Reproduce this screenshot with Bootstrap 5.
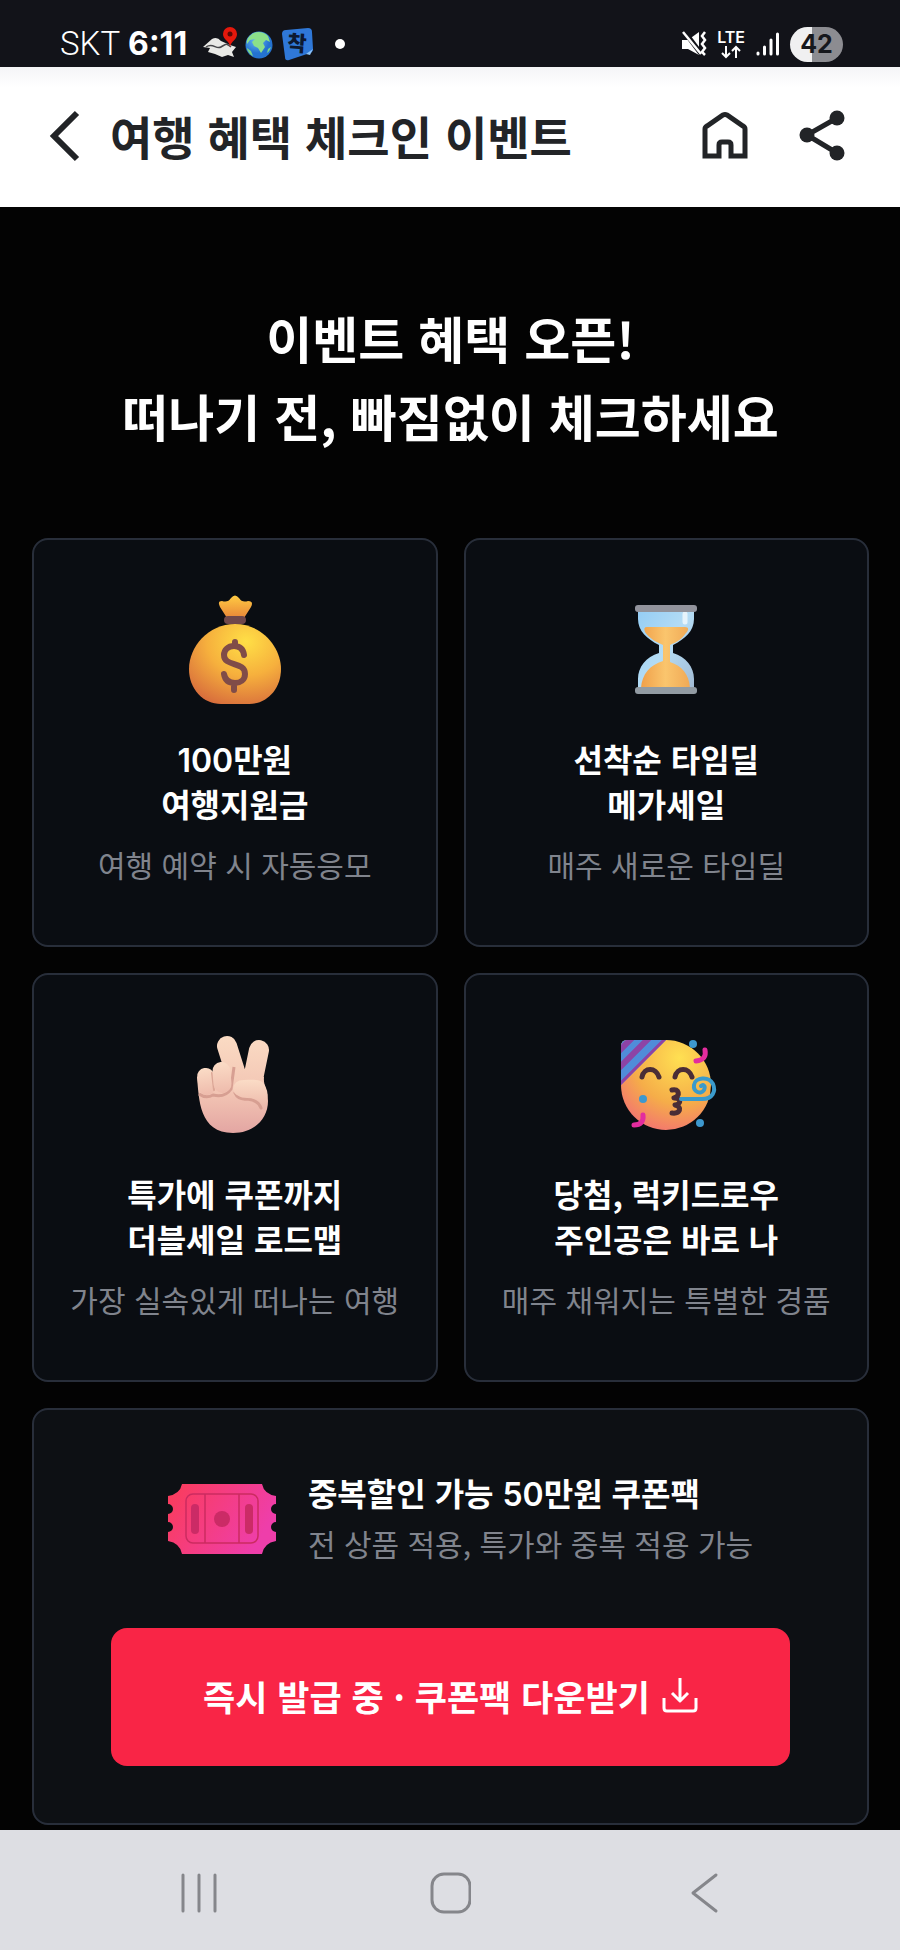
<!DOCTYPE html>
<html lang="ko">
<head>
<meta charset="utf-8">
<meta name="viewport" content="width=device-width, initial-scale=1">
<title>여행 혜택 체크인 이벤트</title>
<link rel="stylesheet" href="https://cdn.jsdelivr.net/npm/bootstrap@5.3.0/dist/css/bootstrap.min.css">
<style>
  body { font-family: "Noto Sans CJK KR", sans-serif; background: #030303; color: #fff; }
  svg { display: block; flex-shrink: 0; }
  .num { font-family: Inter, sans-serif; font-weight: 600; line-height: 1; }

  .status-bar { background: #121319; padding: 21px 57px 0 60px; height: 67px; }
  .carrier { font: 300 33px/46px Roboto, sans-serif; }
  .clock { font: 700 32px/46px Inter, sans-serif; }
  .status-icons { gap: 10px; }
  .lte { font: 600 16px/16px Inter, sans-serif; }
  .battery { width: 53px; height: 35px; border-radius: 18px; font: 700 25px/35px Inter, sans-serif;
    color: #17181d; background: linear-gradient(90deg, #f0f0f1 42%, #8c8c91 42%); }

  .title-bar { background: linear-gradient(#f5f5f7, #fff 20px); color: #222427; padding: 36px 52px 40px 42px; min-height: 140px; }
  .title-bar h1 { font-size: 46px; line-height: 60px; font-weight: 700; padding-left: 26px; }
  .title-bar button { color: inherit; }

  .hero { font-size: 50px; line-height: 78px; font-weight: 700; padding: 91px 0 84px; }
  .page-body { padding: 0 31px 5px 32px; }
  .benefits { --bs-gutter-x: 26px; --bs-gutter-y: 26px; }
  .panel { background: #0a0d12; border: 2px solid #282e3a; border-radius: 16px; }
  .benefit { padding: 54px 16px 59px; }
  .benefit h3, .coupon h3 { font-size: 32px; line-height: 45px; font-weight: 700; }
  .benefit h3 { margin: 30px 0 16px; }
  .sub-text { font-size: 30px; line-height: 44px; font-weight: 400; color: #80848d; }
  .coupon { background: #0d1014; margin-top: 26px; padding: 57px 77px; }
  .coupon-info { gap: 32px; margin-bottom: 59px; }
  .coupon h3, .coupon .sub-text { line-height: 51px; }
  .btn-coupon { --bs-btn-bg: #f92546; --bs-btn-color: #fff; --bs-btn-hover-bg: #e01e3d; --bs-btn-hover-color: #fff;
    border: 0; border-radius: 16px; padding: 41px 16px 43px; font-size: 35px; line-height: 54px; font-weight: 700; gap: 12px; }
  .system-nav { background: #dddee3; height: 120px; padding: 6px 72px 0; color: #85868b; }
  .system-nav button { color: inherit; }
</style>
</head>
<body class="d-flex flex-column min-vh-100">

<div class="status-bar d-flex justify-content-between align-items-center">
  <div class="d-flex align-items-center">
    <span class="carrier me-2">SKT</span>
    <span class="clock me-3">6:11</span>
    <svg class="me-2" width="34" height="34" viewBox="0 0 34 34" aria-hidden="true">
      <path d="M0 20 9 12Q14 9 18 14L27 18 33 20 29 25 31 30 25 28 19 30 12 27 5 25 7 21Z" fill="#e9e9e6"/>
      <path d="M3 20c7-5 10 3 15 0s5-4 10 0" fill="none" stroke="#47474a" stroke-width="1.5"/>
      <path d="M28 20c0-6-7-7-7-13a7 7 0 0 1 14 0c0 6-6 7-7 13Z" transform="translate(-1)" fill="#e5180c"/>
      <circle cx="27" cy="7" r="2.5" fill="#5c0906"/>
    </svg>
    <svg width="28" height="34" viewBox="0 0 28 34" aria-hidden="true">
      <defs><radialGradient id="sea" cx=".4" cy=".3"><stop offset="0" stop-color="#6dbcf5"/><stop offset="1" stop-color="#2472d0"/></radialGradient></defs>
      <circle cx="14" cy="18" r="13.5" fill="url(#sea)"/>
      <path d="M6 8c5-5 13-3 17 1l2 6-4-2-3 3 2 4-4 6-3-5-4-2-2-4 3-3-5 1-3 4c-1-3 1-7 4-9Z" fill="#8ce08a"/>
      <path d="M2 21l4 3 2 5c-3-1-6-5-6-8ZM23 22l3-2c-1 3-2 5-4 6Z" fill="#7ad48a"/>
    </svg>
    <svg class="ms-2" width="34" height="34" viewBox="0 0 34 34" role="img" aria-label="착">
      <path d="M5 3 27 1q4 0 4 4l1 17q0 3-3 4L8 33q-4 1-4-3L1 7q0-4 4-4Z" fill="#2f78d8"/>
      <path d="M32 22l-3 6-4-1Z" fill="#8cc1f5"/>
      <text x="16" y="24" text-anchor="middle" font-family="Noto Sans CJK KR, sans-serif" font-weight="900" font-size="21" fill="#0d1930" transform="rotate(4 16 16)">착</text>
    </svg>
    <svg class="ms-3" width="16" height="12" viewBox="0 0 16 12" aria-hidden="true"><circle cx="9" cy="6" r="5" fill="#fff"/></svg>
  </div>
  <div class="status-icons d-flex align-items-center">
    <svg width="26" height="26" viewBox="0 0 26 26" fill="none" stroke="#fff" aria-hidden="true">
      <path d="M1 9h6l11-8v23L7 18H1Z" fill="#fff" stroke="none"/>
      <path d="M3 0l18 24" stroke="#121319" stroke-width="5"/>
      <path d="M2 1l18 22" stroke-width="2.5"/>
      <path d="M24 1l-3 4 3 4-3 4 3 4-3 4 3 3" stroke-width="2.5"/>
    </svg>
    <div class="lte d-flex flex-column align-items-center">LTE
      <svg width="20" height="14" viewBox="0 0 20 14" fill="none" stroke="#fff" stroke-width="2" aria-hidden="true"><path d="M5 1v11M1 8l4 4 4-4M15 13V2M11 6l4-4 4 4"/></svg>
    </div>
    <svg width="25" height="26" viewBox="0 0 25 26" stroke="#fff" stroke-width="3" stroke-linecap="round" aria-hidden="true"><path d="M3 22v1M9.500 16v7M16 9v14M22.500 3v20"/></svg>
    <div class="battery text-center">42</div>
  </div>
</div>

<header class="title-bar d-flex align-items-center">
  <button class="btn border-0 p-0" type="button" aria-label="뒤로">
    <svg width="42" height="56" viewBox="0 0 42 56" fill="none" stroke="currentColor" stroke-width="6"><path d="M35 6 12 29 35 52"/></svg>
  </button>
  <h1 class="mb-0 flex-grow-1">여행 혜택 체크인 이벤트</h1>
  <button class="btn border-0 p-0 me-5" type="button" aria-label="홈">
    <svg width="48" height="52" viewBox="0 0 48 52" fill="none" stroke="currentColor" stroke-width="5"><path d="M4 47V20q0-2 2-3L22 6q2-1 4 0l16 11q2 1 2 3v27H30V36q0-3-3-3h-6q-3 0-3 3v11Z" transform="translate(1)"/></svg>
  </button>
  <button class="btn border-0 p-0" type="button" aria-label="공유">
    <svg width="52" height="56" viewBox="0 0 52 56" fill="currentColor"><path d="M41 11 11 28l30 18" fill="none" stroke="currentColor" stroke-width="5"/><circle cx="41" cy="11" r="7.500"/><circle cx="11" cy="28" r="7.500"/><circle cx="41" cy="46" r="7.500"/></svg>
  </button>
</header>

<main class="page-body flex-grow-1">
  <h2 class="hero text-center mb-0">이벤트 혜택 오픈!<br>떠나기 전, 빠짐없이 체크하세요</h2>

  <div class="row benefits">
    <div class="col-6">
      <section class="panel benefit h-100 d-flex flex-column align-items-center text-center">
        <svg width="112" height="112" viewBox="0 0 112 112" aria-hidden="true">
          <defs>
            <radialGradient id="bag" cx=".62" cy=".22" r=".85"><stop offset="0" stop-color="#ffdf46"/><stop offset=".5" stop-color="#f6b03d"/><stop offset="1" stop-color="#d86d3c"/></radialGradient>
            <linearGradient id="frill" x1="0" y1="0" x2="0" y2="1"><stop offset="0" stop-color="#ffcb43"/><stop offset="1" stop-color="#e98638"/></linearGradient>
          </defs>
          <path d="M48 24 41 13q-3-6 2-6 6 2 9-3 4-5 8 0 3 5 9 3 6 0 3 6l-7 11Z" fill="url(#frill)"/>
          <path d="M56 30C29 30 10 53 10 75c0 20 14 35 32 35h28c18 0 32-15 32-35 0-22-19-45-46-45Z" fill="url(#bag)"/>
          <rect x="45" y="22" width="22" height="8" rx="4" fill="#71484a"/>
          <path d="M65 61c-1-7-5-9-10-9-6 0-10 4-10 9 0 12 21 6 21 19 0 6-5 9-10 9-6 0-10-3-11-9M56 48v4M55 89v7" fill="none" stroke="#804c48" stroke-width="6" stroke-linecap="round"/>
        </svg>
        <h3><span class="num">100</span>만원<br>여행지원금</h3>
        <p class="sub-text mb-0">여행 예약 시 자동응모</p>
      </section>
    </div>
    <div class="col-6">
      <section class="panel benefit h-100 d-flex flex-column align-items-center text-center">
        <svg width="112" height="112" viewBox="0 0 112 112" aria-hidden="true">
          <defs>
            <linearGradient id="glass" x1="0" y1="0" x2="1" y2="1"><stop offset="0" stop-color="#94cdf5"/><stop offset=".5" stop-color="#b4dcf5"/><stop offset="1" stop-color="#a1b9d2"/></linearGradient>
            <linearGradient id="sand" x1="0" y1="0" x2="1" y2="0"><stop offset="0" stop-color="#f0a04a"/><stop offset=".5" stop-color="#fac56d"/><stop offset="1" stop-color="#f0a956"/></linearGradient>
          </defs>
          <path d="M28 15h56v10c0 12-9 20-21 26v8c13 4 21 14 21 26v12H28V85c0-12 8-22 21-26v-8C37 45 28 37 28 25Z" fill="url(#glass)"/>
          <path d="M37 33h38c4 0 4 3 1 6-4 6-9 9-16 12v17c12 4 19 12 20 26H31c1-14 9-23 22-27V51c-7-3-14-7-18-13q-2-5 2-5Z" fill="url(#sand)"/>
          <path d="M75 20v8" stroke="#e6f3fb" stroke-width="5" stroke-linecap="round"/>
          <rect x="25" y="11" width="62" height="7" rx="3" fill="#92939c"/>
          <rect x="25" y="93" width="62" height="7" rx="3" fill="#929ba3"/>
        </svg>
        <h3>선착순 타임딜<br>메가세일</h3>
        <p class="sub-text mb-0">매주 새로운 타임딜</p>
      </section>
    </div>
    <div class="col-6">
      <section class="panel benefit h-100 d-flex flex-column align-items-center text-center">
        <svg width="112" height="112" viewBox="0 0 112 112" aria-hidden="true">
          <defs>
            <linearGradient id="skin" gradientUnits="userSpaceOnUse" x1="0" y1="5" x2="0" y2="105"><stop offset="0" stop-color="#fbdcc4"/><stop offset=".6" stop-color="#f2c4b3"/><stop offset="1" stop-color="#e3a5a2"/></linearGradient>
            <linearGradient id="fold" x1="0" y1="0" x2="0" y2="1"><stop offset="0" stop-color="#fbdcc6"/><stop offset="1" stop-color="#eebbac"/></linearGradient>
          </defs>
          <path d="M48 17 61 58M80 21 73 55" fill="none" stroke="url(#skin)" stroke-width="20" stroke-linecap="round"/>
          <path d="M18 48C20 70 20 104 54 104c21 0 35-14 35-32 0-10-5-16-4-24L62 42 22 46Z" fill="url(#skin)"/>
          <path d="M20 65q7 5 14 1 12 3 18-6l3-22" fill="none" stroke="#d79f92" stroke-width="3"/>
          <rect x="19" y="39" width="17" height="27" rx="8" transform="rotate(-7 27 54)" fill="url(#fold)"/>
          <path d="M33 44l2 17" stroke="#dba696" stroke-width="2" stroke-linecap="round"/>
          <rect x="34" y="33" width="18" height="31" rx="9" transform="rotate(-5 43 49)" fill="url(#fold)"/>
          <path d="M56 64q3 7 12 6 11 1 14 9" fill="none" stroke="#d79f92" stroke-width="3" stroke-linecap="round"/>
          <path d="M54 60q1-9 11-9c10 0 19-2 22 8q4 8-2 18-5-8-17-8-13-1-14-9Z" fill="url(#fold)"/>
        </svg>
        <h3>특가에 쿠폰까지<br>더블세일 로드맵</h3>
        <p class="sub-text mb-0">가장 실속있게 떠나는 여행</p>
      </section>
    </div>
    <div class="col-6">
      <section class="panel benefit h-100 d-flex flex-column align-items-center text-center">
        <svg width="112" height="112" viewBox="0 0 112 112" aria-hidden="true">
          <defs>
            <radialGradient id="face" cx=".65" cy=".2" r=".85"><stop offset="0" stop-color="#ffe052"/><stop offset=".6" stop-color="#f5ad49"/><stop offset="1" stop-color="#f3766f"/></radialGradient>
            <clipPath id="hat"><path d="M11 17q0-6 6-6h39L11 56Z"/></clipPath>
          </defs>
          <path d="M17 11h39a45 45 0 1 1-45 45V17q0-6 6-6Z" fill="url(#face)"/>
          <g clip-path="url(#hat)"><path d="M0 0h70v70H0Z" fill="#508cd9"/><path d="M8 23 28 3M8 40 44 4M7 60 64 3" stroke="#8d43a5" stroke-width="6"/></g>
          <path d="M32 48c2-10 14-10 17 0M65 48c2-10 14-10 17 0" fill="none" stroke="#4a2d36" stroke-width="5" stroke-linecap="round"/>
          <path d="M62 62c7-2 9 6 2 8 7 0 8 6 1 7 8 2 5 9-3 8" transform="translate(0 -1)" fill="none" stroke="#4a2d36" stroke-width="5" stroke-linecap="round" stroke-linejoin="round"/>
          <path d="M71 70h21c11 0 14-8 11-15-4-8-18-7-19 1-1 7 7 10 10 5 2-4-1-6-3-4" fill="none" stroke="#3b9acb" stroke-width="4" stroke-linecap="round"/>
          <g fill="#3d98ce"><circle cx="83" cy="15" r="4"/><circle cx="33" cy="70" r="4"/><circle cx="90" cy="94" r="4"/></g>
          <path d="M95 21q2 10-9 11M33 86q1 10-9 10" fill="none" stroke="#e32c9e" stroke-width="5" stroke-linecap="round"/>
        </svg>
        <h3>당첨, 럭키드로우<br>주인공은 바로 나</h3>
        <p class="sub-text mb-0">매주 채워지는 특별한 경품</p>
      </section>
    </div>
  </div>

  <section class="panel coupon">
    <div class="coupon-info d-flex align-items-center justify-content-center">
      <svg width="128" height="102" viewBox="0 0 128 102" aria-hidden="true">
        <defs><linearGradient id="ticket" x1="0" y1="0" x2="1" y2=".4"><stop offset="0" stop-color="#fb3c58"/><stop offset="1" stop-color="#ee3eaa"/></linearGradient></defs>
        <path d="M34 17h80q2 10 14 12v8a5 5 0 0 0 0 10v8a5 5 0 0 0 0 10v9q-12 2-14 13H34q-2-11-14-13v-9a5 5 0 0 0 0-10v-8a5 5 0 0 0 0-10v-8q12-2 14-12Z" fill="url(#ticket)"/>
        <g fill="none" stroke="#cb2b60" stroke-width="1.500"><rect x="38" y="27" width="72" height="49" rx="7"/><path d="M57 27v49M91 27v49"/></g>
        <g fill="#cb2b66"><rect x="43" y="37" width="8" height="30" rx="4"/><rect x="97" y="37" width="8" height="30" rx="4"/><circle cx="74" cy="52" r="8"/></g>
      </svg>
      <div>
        <h3 class="mb-0">중복할인 가능 <span class="num">50</span>만원 쿠폰팩</h3>
        <p class="sub-text mb-0">전 상품 적용, 특가와 중복 적용 가능</p>
      </div>
    </div>
    <button class="btn btn-coupon w-100 d-flex align-items-center justify-content-center" type="button">즉시 발급 중 · 쿠폰팩 다운받기
      <svg width="36" height="38" viewBox="0 0 36 38" fill="none" stroke="currentColor" stroke-width="3" stroke-linejoin="round" aria-hidden="true"><path d="M18 1v22M10 16l8 8 8-8M2 21v10q0 3 3 3h26q3 0 3-3V21"/></svg>
    </button>
  </section>
</main>

<nav class="system-nav d-flex align-items-center" aria-label="시스템 탐색">
  <button class="btn border-0 p-0 flex-fill d-flex justify-content-center" type="button" aria-label="최근 앱"><svg width="42" height="42" viewBox="0 0 42 42" stroke="currentColor" stroke-width="3" stroke-linecap="round"><path d="M6 3v36M22 3v36M38 3v36"/></svg></button>
  <button class="btn border-0 p-0 flex-fill d-flex justify-content-center" type="button" aria-label="홈 화면"><svg width="42" height="42" viewBox="0 0 42 42" fill="none" stroke="currentColor" stroke-width="3"><rect x="3" y="2" width="38" height="38" rx="12"/></svg></button>
  <button class="btn border-0 p-0 flex-fill d-flex justify-content-center" type="button" aria-label="이전 화면"><svg width="42" height="42" viewBox="0 0 42 42" fill="none" stroke="currentColor" stroke-width="3" stroke-linecap="round" stroke-linejoin="round"><path d="M35 3 12 21l23 18"/></svg></button>
</nav>

<script src="https://cdn.jsdelivr.net/npm/bootstrap@5.3.0/dist/js/bootstrap.bundle.min.js"></script>
</body>
</html>
